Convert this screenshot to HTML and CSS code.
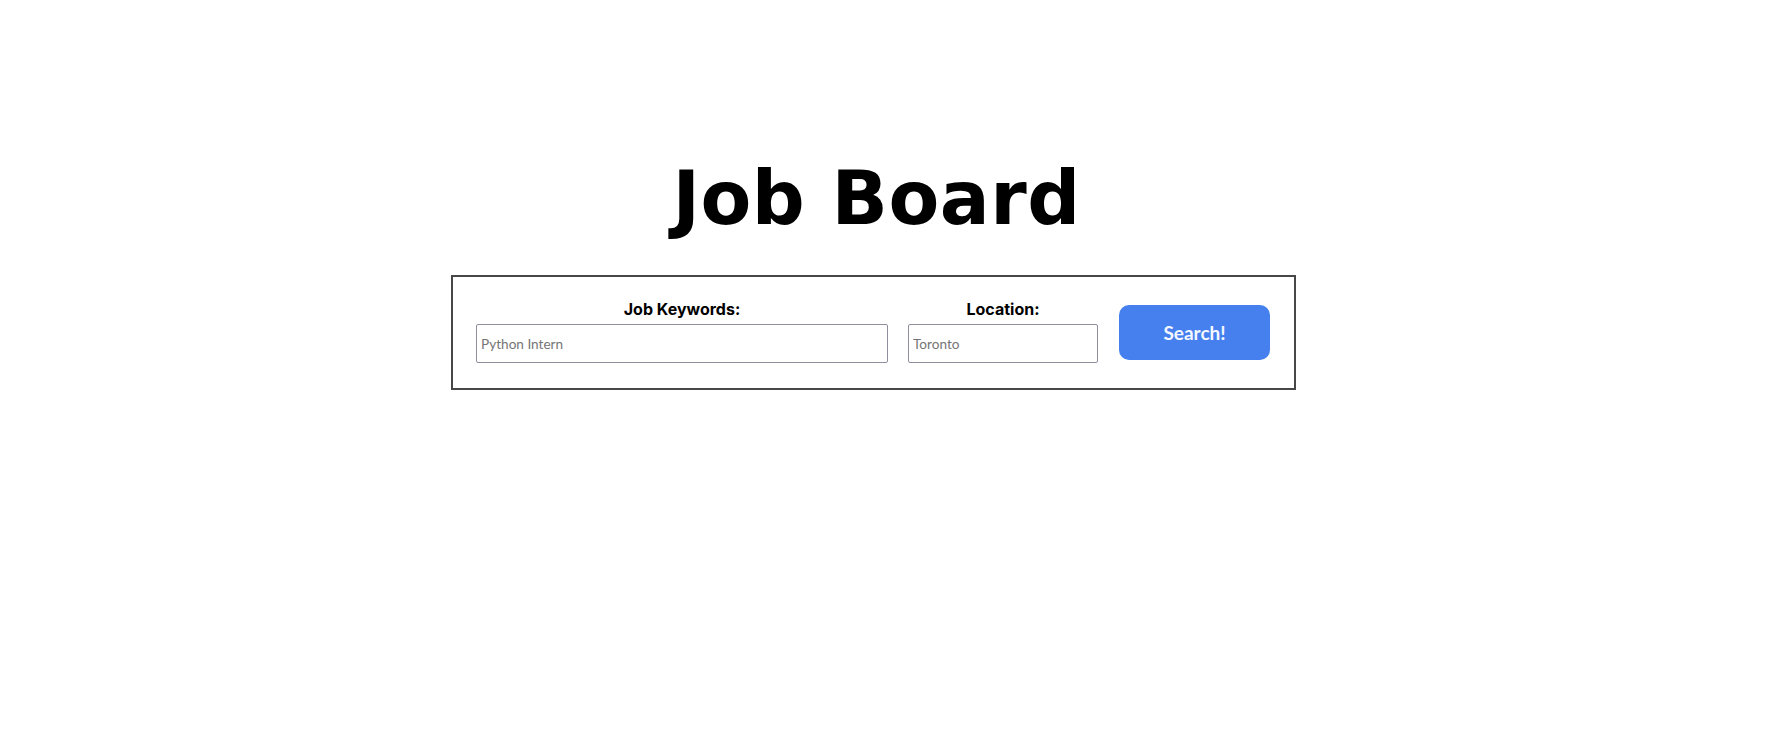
FILE: index.html
```html
<!DOCTYPE html>
<html lang="en">
<head>
<meta charset="utf-8">
<title>Job Board</title>
<link rel="stylesheet" href="styles.css">
</head>
<body>
<main class="page">
  <h1 class="title">Job Board</h1>
  <form class="search" onsubmit="return false;">
    <div class="field">
      <label class="field-label" for="kw">Job Keywords:</label>
      <input class="field-input field-input--wide" id="kw" type="text" placeholder="Python Intern">
    </div>
    <div class="field">
      <label class="field-label" for="loc">Location:</label>
      <input class="field-input field-input--narrow" id="loc" type="text" placeholder="Toronto">
    </div>
    <button class="search-btn" type="submit">Search!</button>
  </form>
</main>
</body>
</html>
```

FILE: styles.css
```css
html, body {
  margin: 0;
  padding: 0;
  background: #ffffff;
}

.page {
  display: flex;
  flex-direction: column;
  align-items: center;
  padding: 161px 28px 0 0;
}

.title {
  margin: 0 0 40px 0;
  padding-left: 6px;
  font-family: "DejaVu Sans", sans-serif;
  font-weight: 700;
  font-size: 74px;
  letter-spacing: 0.5px;
  line-height: 1;
  color: #000;
}

.search {
  display: flex;
  align-items: center;
  gap: 20px;
  box-sizing: border-box;
  width: 845px;
  height: 115px;
  padding: 0 22px 0 23px;
  border: 2px solid #474747;
}

.field {
  display: flex;
  flex-direction: column;
  align-items: center;
  gap: 5px;
  margin-bottom: 3px;
}

.field-label {
  font-family: Inter, sans-serif;
  font-weight: 700;
  font-size: 16px;
  line-height: 20px;
  color: #000;
}

.field-input {
  box-sizing: border-box;
  height: 39px;
  margin: 0;
  padding: 1px 4px;
  border: 1px solid #8f8f9d;
  border-radius: 2px;
  font-family: Lato, sans-serif;
  font-size: 13.6px;
  color: #000;
  background: #fff;
}

.field-input::placeholder {
  color: #757575;
}

.field-input--wide {
  width: 412px;
}

.field-input--narrow {
  width: 190px;
}

.search-btn {
  width: 151px;
  height: 55px;
  margin: 0 0 0 1px;
  padding: 0;
  border: none;
  border-radius: 10px;
  background: #4580ee;
  color: #f4f7ff;
  font-family: Lato, sans-serif;
  font-weight: 700;
  font-size: 19px;
  cursor: pointer;
}
```
